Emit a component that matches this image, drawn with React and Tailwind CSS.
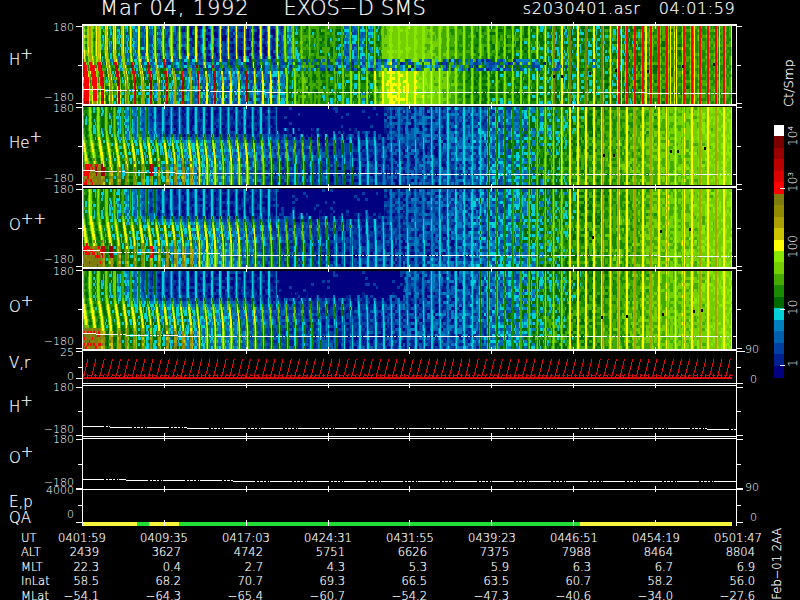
import React from 'react';

// colour table of the plot, low counts first
const palette = ['#000080', '#002090', '#0040a0', '#0060b0', '#0080c0', '#00d0d8', '#006a00', '#1a8a00', '#44aa00', '#74cf00', '#88e800', '#ffff00', '#ccc400', '#aca000', '#948a00', '#7c7c10', '#ff0000', '#dd0000', '#bb0000', '#990000', '#7a0000', '#ffffff'];

const X0 = 82;
const X1 = 732;
const SPIN = 8.13;
const tickXs = [164, 246, 328, 409, 491, 573, 655];

function makeRand(seed) {
  let a = seed;
  return () => {
    a = (a + 0x6d2b79f5) | 0;
    let t = Math.imul(a ^ (a >>> 15), 1 | a);
    t = (t + Math.imul(t ^ (t >>> 7), 61 | t)) ^ t;
    return ((t ^ (t >>> 14)) >>> 0) / 4294967296;
  };
}

function knots(list, t) {
  if (t <= list[0][0]) return list[0][1];
  for (let i = 1; i < list.length; i++) {
    if (t <= list[i][0]) {
      const [a, va] = list[i - 1];
      const [b, vb] = list[i];
      return va + ((vb - va) * (t - a)) / (b - a);
    }
  }
  return list[list.length - 1][1];
}

function smooth(v, a, b) {
  const n = Math.min(1, Math.max(0, (v - a) / (b - a)));
  return n * n * (3 - 2 * n);
}

const mix = (a, b, n) => a + (b - a) * n;

function stripeAt(x, shift, t, scale = 1) {
  const pos = (x - X0 - shift) / SPIN;
  const k = Math.round(pos);
  const d = (pos - k) * SPIN;
  const w = knots([[0, 1.9], [0.1, 1.5], [0.3, 1.3], [0.7, 1.1], [1, 0.95]], t) * scale;
  return { k, d, s: Math.exp(-(d * d) / (w * w)) };
}

const ampOf = (amp, k) => amp[((k % amp.length) + amp.length) % amp.length];

// H+ panel: strong spin stripes on the left, bright plateau in the middle, red stripes on the right
function hydrogen(x, y, top, bottom, rand, amp) {
  const t = (x - X0) / (X1 - X0);
  const u = (y - top) / (bottom - top);
  const shift = 5 * (1 - Math.min(t / 0.5, 1)) * smooth(u, 0.3, 0.8);
  const low = smooth(u, 0.4, 0.6);
  const wedge = t < 0.03 ? 1.6 : 1;
  const { k, d, s } = stripeAt(x, shift, t, wedge);
  let peak = mix(
    knots([[0, 13], [0.1, 11], [0.3, 11], [0.36, 8], [0.46, 9], [0.47, 10.5], [0.62, 10], [0.75, 11], [1, 11]], t),
    knots([[0, 14], [0.18, 13], [0.2, 12], [0.3, 11], [0.36, 8], [0.46, 11], [0.55, 11], [0.6, 10], [0.75, 11], [1, 11]], t),
    low,
  );
  if (t > 0.82) peak = 16;
  else if (t > 0.72 && k % 2 === 0) peak = 15;
  const trough = mix(
    knots([[0, 6], [0.1, 3], [0.2, 1], [0.3, 1], [0.34, 7], [0.39, 6.5], [0.41, 3], [0.45, 5], [0.47, 9.2], [0.52, 9], [0.56, 8], [0.6, 7], [0.68, 6.5], [0.74, 5.5], [0.88, 7], [1, 7.5]], t),
    knots([[0, 7], [0.2, 3], [0.3, 3], [0.34, 7.5], [0.4, 6], [0.45, 6], [0.47, 10.6], [0.49, 10.4], [0.52, 9.5], [0.56, 8.5], [0.6, 6.5], [0.74, 6], [0.88, 7], [1, 7.5]], t),
    low,
  );
  const noise = knots([[0, 1.7], [0.3, 1.7], [0.34, 1.4], [0.45, 1.8], [0.47, 0.4], [0.58, 0.6], [0.65, 1.4], [0.85, 1.7], [0.9, 0.9], [1, 0.7]], t);
  const n = (rand() - 0.5) * 2 * noise;
  let v = mix(trough + n, peak, Math.min(1, s * ampOf(amp, k)));
  if (t > 0.72 && s > 0.45) v = peak;
  // thin yellow line beside some of the red stripes
  if (t > 0.82 && k % 3 === 0 && d > 2.5 && d < 3.6) v = 11;
  // red wedge low on the left, thinner red streaks after it
  if (u > 0.42 + rand() * 0.08 && s > 0.5) {
    if (t < 0.03 && u < 0.97) v = 16;
    else if (t < 0.18 && k % 2 === 0) v = 16 + rand() * 3;
    else if (t < 0.3 && k % 4 === 0) v = 17 + rand() * 2;
  }
  // dark band across the middle of the pitch angle range
  const bandWeight = smooth(t, 0.1, 0.16) * (1 - smooth(t, 0.62, 0.82));
  if (Math.abs(u - 0.5) < 0.075 + rand() * 0.02 && rand() < 0.75 * bandWeight) {
    v = s > 0.5 && t < 0.6 ? 6 + rand() * 2 : 1 + rand() * 4;
  }
  return v;
}

// He+, O++ and O+ panels share one shape
function heavy(x, y, top, bottom, rand, amp, opts) {
  const t = (x - X0) / (X1 - X0);
  const u = (y - top) / (bottom - top);
  const shift = 5 * (1 - Math.min(t / 0.6, 1)) * smooth(u, 0.25, 0.8);
  const { k, s } = stripeAt(x, shift, t);
  const low = smooth(u, 0.32, 0.5);
  let peak = mix(
    knots([[0, 11], [0.05, 9], [0.12, 5.5], [0.3, 5], [0.35, 4.5], [0.46, 4], [0.6, 5], [0.7, 9], [0.75, 11], [1, 11]], t),
    knots([[0, 11.5], [0.25, 11], [0.33, 9], [0.42, 5.5], [0.5, 4.5], [0.6, 5], [0.7, 9], [0.75, 11], [1, 11]], t),
    low,
  );
  if (t > 0.8 && k % 2 === 0) peak = 13;
  const trough = mix(
    knots([[0, 6], [0.05, 5], [0.12, 1], [0.3, 0.5], [0.46, 0.5], [0.47, 1.5], [0.6, 2.5], [0.68, 4], [0.72, 5.3], [0.76, 6.5], [0.9, 8.5], [1, 9.4]], t),
    knots([[0, 6.5], [0.12, 5], [0.2, 4], [0.3, 2], [0.4, 1.2], [0.47, 1.5], [0.6, 2.5], [0.68, 4.5], [0.72, 6], [0.76, 7], [0.9, 8.6], [1, 9.4]], t),
    low,
  );
  const noise = knots([[0, 1], [0.45, 1.3], [0.5, 2.2], [0.72, 2], [0.8, 1], [1, 0.7]], t);
  const n = (rand() - 0.5) * 2 * noise;
  let v = mix(trough + n, peak, Math.min(1, s * ampOf(amp, k)));
  if (t > 0.74 && s > 0.5) v = peak;
  if (t > 0.3 && t < opts.blockEnd && u < 0.27 + rand() * 0.12) v = rand() < 0.05 ? 2 : 0;
  // olive smear low on the left, fading in rather than starting at a hard edge
  if (t < 0.18 && u > 0.66 + rand() * 0.14 && s > 0.45) v = 12 + rand() * 3;
  if (t < 0.03 && u > 0.72) v = 14 + rand() * 2;
  for (const spot of opts.reds) {
    const dx = (x - spot[0]) / spot[2];
    const dy = (y - spot[1]) / 6;
    if (dx * dx + dy * dy < 1 && s > 0.2 && rand() < 0.85) v = 16 + spot[3];
  }
  return v;
}

function buildCells(model, top, bottom, seed, opts) {
  const seedRand = makeRand(seed);
  const amp = Array.from({ length: 37 }, () => 0.9 + seedRand() * 0.45);
  const paths = palette.map(() => []);
  let row = 0;
  for (let y = top; y < bottom; y += 3) {
    let start = X0 + 1;
    let current = -1;
    for (let x = X0 + 1; x <= X1; x++) {
      let index = -1;
      if (x < X1) {
        // noise is held over blocks about 3px wide, the stripes keep 1px detail
        const rand = makeRand(seed * 31 + Math.floor(x / 2.7) * 1009 + row * 7919);
        const v = model(x + 0.5, y + 1.5, top, bottom, rand, amp, opts);
        index = Math.max(0, Math.min(20, Math.round(v)));
      }
      if (index !== current) {
        if (current >= 0) paths[current].push(`M${start} ${y}h${x - start}v3h${start - x}z`);
        start = x;
        current = index;
      }
    }
    row++;
  }
  return paths.map((p) => p.join(''));
}

const panels = {
  h: buildCells(hydrogen, 26, 104, 11),
  he: buildCells(heavy, 107, 185, 23, { blockEnd: 0.465, reds: [[88, 170, 5, 0], [102, 171, 7, 3], [153, 170, 6, 2]] }),
  opp: buildCells(heavy, 189, 267, 37, { blockEnd: 0.465, reds: [[88, 250, 5, 0], [104, 251, 6, 2], [112, 251, 4, 3], [152, 251, 6, 0]] }),
  op: buildCells(heavy, 271, 349, 41, { blockEnd: 0.495, reds: [] }),
};

function Spectrogram({ cells, specks }) {
  return (
    <g shapeRendering="crispEdges">
      {cells.map((d, i) => (d ? <path key={i} d={d} fill={palette[i]} /> : null))}
      {specks.map(([x, y]) => (
        <rect key={`${x}-${y}`} x={x} y={y} width="2" height="3" fill="#000" />
      ))}
    </g>
  );
}

// pitch angle trace: stepped white line, solid then dotted along the spin
function Trace({ steps }) {
  const d = steps.map(([x, y], i) => {
    const next = steps[i + 1] ? steps[i + 1][0] : 736;
    return `M${x} ${y + 0.5}H${next}`;
  });
  return <path d={d.join('')} stroke="#fff" strokeWidth="1" strokeDasharray="22 2 2 1 3 1 2 2 1 1" shapeRendering="crispEdges" fill="none" />;
}

function Velocity() {
  const saw = [];
  for (let x = X0 + 1; x < X1 - 5; x += SPIN) {
    saw.push(`M${x.toFixed(1)} 378L${(x + 2).toFixed(1)} 371L${(x + 5).toFixed(1)} 359`);
    saw.push(`M${(x + 4).toFixed(1)} 378L${(x + 5).toFixed(1)} 374`);
  }
  return (
    <g fill="none" stroke="#e01010" strokeWidth="1" shapeRendering="crispEdges">
      <path d={saw.join('')} />
      <path d={`M${X0} 377.5H${X1}`} strokeWidth="2" />
      <path d={`M${X0} 375.5H736`} strokeDasharray="3 3" stroke="#c01010" />
    </g>
  );
}

function QualityBar() {
  const parts = [[82, 137, '#f6f63c'], [137, 149, '#22dd33'], [149, 179, '#f6f63c'], [179, 580, '#22dd33'], [580, 732, '#f6f63c']];
  return (
    <g shapeRendering="crispEdges">
      {parts.map(([a, b, c]) => (
        <rect key={a} x={a} y="522" width={b - a} height="3.5" fill={c} />
      ))}
    </g>
  );
}

const rows = [
  {
    name: 'H', sup: '+', top: 24, h: 80, pad: 'pt-[28px]', lines: [[24, 2]], xTicks: [22, 29],
    left: [[26, 6], [65, 4], [103, 6]], right: [[26, 5], [65, 4], [103, 5]],
    labels: [['180', 74, 27], ['−180', 74, 97]], rightLabels: [],
    data: (
      <>
        <Spectrogram cells={panels.h} specks={[[553, 75], [561, 75], [589, 72], [615, 69], [647, 70], [682, 65], [713, 63]]} />
        <Trace steps={[[82, 89], [105, 90], [210, 91], [265, 92], [647, 93]]} />
      </>
    ),
  },
  {
    name: 'He', sup: '+', top: 104, h: 82, pad: 'pt-[31px]', lines: [[104, 2]], xTicks: [102, 109],
    left: [[107, 6], [146, 4], [184, 6]], right: [[107, 5], [146, 4], [184, 5]],
    labels: [['180', 74, 108], ['−180', 74, 178]], rightLabels: [],
    data: (
      <>
        <Spectrogram cells={panels.he} specks={[[603, 154], [613, 154], [670, 150], [677, 150], [704, 147]]} />
        <Trace steps={[[82, 170], [95, 171], [125, 172], [175, 173], [400, 174]]} />
      </>
    ),
  },
  {
    name: 'O', sup: '++', top: 186, h: 81, pad: 'pt-[31px]', lines: [[186, 2]], xTicks: [184, 191],
    left: [[189, 6], [228, 4], [266, 6]], right: [[189, 5], [228, 4], [266, 5]],
    labels: [['180', 74, 189], ['−180', 74, 259]], rightLabels: [],
    data: (
      <>
        <Spectrogram cells={panels.opp} specks={[[592, 236], [660, 230], [689, 228]]} />
        <Trace steps={[[82, 250], [100, 252], [170, 253], [220, 255], [660, 256]]} />
      </>
    ),
  },
  {
    name: 'O', sup: '+', top: 267, h: 82, pad: 'pt-[32px]', lines: [[267, 2]], xTicks: [265, 272],
    left: [[270, 6], [309, 4], [348, 6]], right: [[270, 5], [309, 4], [348, 5]],
    labels: [['180', 74, 271], ['−180', 74, 341]], rightLabels: [],
    data: (
      <>
        <Spectrogram cells={panels.op} specks={[[601, 316], [626, 315], [662, 313], [693, 310], [701, 309]]} />
        <Trace steps={[[82, 333], [96, 334], [126, 335], [178, 336]]} />
      </>
    ),
  },
  {
    name: 'V,r', top: 349, h: 36, pad: 'pt-[6px]', lines: [[349, 2], [383, 1]], xTicks: [347, 354],
    left: [[351, 6], [367, 4], [378, 6]], right: [[351, 8], [367, 4], [383, 6]],
    labels: [['25', 74, 352], ['0', 74, 376]], rightLabels: [['90', 745, 349], ['0', 750, 379]],
    data: <Velocity />,
  },
  {
    name: 'H', sup: '+', top: 385, h: 53, pad: 'pt-[14px]', lines: [[385, 1], [436, 1]], xTicks: [383, 388],
    left: [[387, 6], [411, 4], [435, 6]], right: [[387, 6], [411, 4], [435, 6]],
    labels: [['180', 74, 387], ['−180', 74, 429]], rightLabels: [],
    data: <Trace steps={[[82, 426], [110, 427], [187, 428], [707, 429]]} />,
  },
  {
    name: 'O', sup: '+', top: 438, h: 51, pad: 'pt-[12px]', lines: [[438, 1]], xTicks: [433, 441],
    left: [[439, 6], [464, 4], [488, 6]], right: [[439, 6], [464, 4], [488, 6]],
    labels: [['180', 74, 439], ['−180', 74, 482]], rightLabels: [],
    data: <Trace steps={[[82, 479], [126, 480], [233, 481]]} />,
  },
];

const columns = [
  ['UT', '0401:59', '0409:35', '0417:03', '0424:31', '0431:55', '0439:23', '0446:51', '0454:19', '0501:47'],
  ['ALT', '2439', '3627', '4742', '5751', '6626', '7375', '7988', '8464', '8804'],
  ['MLT', '22.3', '0.4', '2.7', '4.3', '5.3', '5.9', '6.3', '6.7', '6.9'],
  ['InLat', '58.5', '68.2', '70.7', '69.3', '66.5', '63.5', '60.7', '58.2', '56.0'],
  ['MLat', '−54.1', '−64.3', '−65.4', '−60.7', '−54.2', '−47.3', '−40.6', '−34.0', '−27.6'],
];

function Axes({ top, h, lines, xTicks, left, right, labels, rightLabels }) {
  return (
    <>
      <g fill="#fff" shapeRendering="crispEdges">
        <rect x={X0} y={top} width="1" height={h} />
        <rect x="736" y={top} width="1" height={h} />
        {lines.map(([y, size]) => (
          <rect key={y} x={X0} y={y} width="654" height={size} />
        ))}
        {tickXs.map((x) => (
          <rect key={x} x={x} y={xTicks[0]} width="1" height={xTicks[1] - xTicks[0]} />
        ))}
        {left.map(([y, len]) => (
          <rect key={y} x={X0 - len} y={y} width={len} height="1" />
        ))}
        {right.map(([y, len]) => (
          <rect key={y} x="737" y={y} width={len} height="1" />
        ))}
      </g>
      {labels.map(([text, x, y]) => (
        <text key={text} x={x} y={y} textAnchor="end" dominantBaseline="central" className="fill-white text-[11px]">
          {text}
        </text>
      ))}
      {rightLabels.map(([text, x, y]) => (
        <text key={text} x={x} y={y} dominantBaseline="central" className="fill-white text-[11px]">
          {text}
        </text>
      ))}
    </>
  );
}

function PlotRow({ row }) {
  return (
    <div className="flex" style={{ height: row.h }}>
      <div className={`w-[40px] pl-[9px] text-[15px] leading-[16px] whitespace-nowrap text-white ${row.pad}`}>
        {row.name}
        {row.sup && <sup className="text-[15px] -top-[6px]">{row.sup}</sup>}
      </div>
      <svg width="725" height={row.h} viewBox={`40 ${row.top} 725 ${row.h}`} className="block overflow-visible">
        {row.data}
        <Axes {...row} />
      </svg>
    </div>
  );
}

function ColorBar() {
  const size = 252 / 22;
  const ticks = [
    ['10⁴', 21],
    ['10³', 67],
    ['100', 133],
    ['10', 190],
    ['1', 242],
  ];
  return (
    <svg width="35" height="252" className="block overflow-visible">
      <g shapeRendering="crispEdges">
        {[...palette].reverse().map((c, i) => (
          <rect key={c} x="9" y={i * size} width="10" height={size + 0.5} fill={c} />
        ))}
        {[63, 184, 240].map((y) => (
          <rect key={y} x="15" y={y} width="5" height="1" fill="#fff" />
        ))}
      </g>
      {ticks.map(([text, y]) => (
        <text key={text} transform={`translate(28 ${y}) rotate(-90)`} textAnchor="start" dominantBaseline="central" className="fill-white text-[12px]">
          {text}
        </text>
      ))}
    </svg>
  );
}

export default function App() {
  return (
    <div className="w-[800px] h-[600px] bg-black text-white overflow-hidden font-['DejaVu_Sans',sans-serif] font-extralight [-webkit-text-stroke:0.2px_#fff]">
      <header className="flex items-start h-[24px] whitespace-nowrap">
        <span className="ml-[100px] text-[21px] leading-[17px] tracking-[0.8px]">Mar 04, 1992</span>
        <span className="ml-[34px] text-[21px] leading-[17px] tracking-[0.1px]">EXOS−D SMS</span>
        <span className="ml-[97px] text-[16px] leading-[18px] tracking-[0.7px]">s2030401.asr</span>
        <span className="ml-[18px] text-[16px] leading-[18px] tracking-[0.6px]">04:01:59</span>
      </header>

      <div className="flex">
        <main className="w-[765px]">
          {rows.map((row) => (
            <PlotRow key={row.top} row={row} />
          ))}

          <div className="flex h-[37px]">
            <div className="w-[40px] pl-[9px] pt-[5px] text-[15px] leading-[16px] whitespace-nowrap">
              <div>E,p</div>
              <div>QA</div>
            </div>
            <svg width="725" height="37" viewBox="40 489 725 37" className="block overflow-visible">
              <QualityBar />
              <Axes
                top={489}
                h={37}
                lines={[[489, 1]]}
                xTicks={[486, 492]}
                left={[[489, 6], [505, 4], [522, 6]]}
                right={[[489, 6], [505, 4], [522, 6]]}
                labels={[['4000', 74, 490], ['0', 74, 514]]}
                rightLabels={[['90', 745, 487], ['0', 750, 517]]}
              />
              <g fill="#fff" shapeRendering="crispEdges">
                {tickXs.map((x) => (
                  <rect key={x} x={x} y="520" width="1" height="6" />
                ))}
              </g>
            </svg>
          </div>

          <div className="grid grid-cols-[41px_repeat(9,82px)] auto-rows-[14.5px] items-center pt-[5px] text-[11.5px] leading-[9px] whitespace-nowrap">
            {columns.map((cells, r) =>
              cells.map((cell, c) => {
                if (c === 0) return <div key={c} className="pl-[21px]">{cell}</div>;
                return (
                  <div key={c} className={r === 0 ? 'text-center' : 'text-right pr-[24px]'}>
                    {cell}
                  </div>
                );
              }),
            )}
          </div>
        </main>

        <aside className="w-[35px] flex flex-col items-start">
          <div className="h-[101px] pt-[38px] text-[13px] leading-[14px] self-end">
            <div className="[writing-mode:vertical-rl] rotate-180 text-center h-[45px] w-[14px] mr-[4px]">Ct/Smp</div>
          </div>
          <ColorBar />
          <div className="mt-[151px] ml-[5px] text-[11.5px] leading-[14px] whitespace-nowrap [writing-mode:vertical-rl] rotate-180">
            Feb−01 2AA
          </div>
        </aside>
      </div>
    </div>
  );
}
